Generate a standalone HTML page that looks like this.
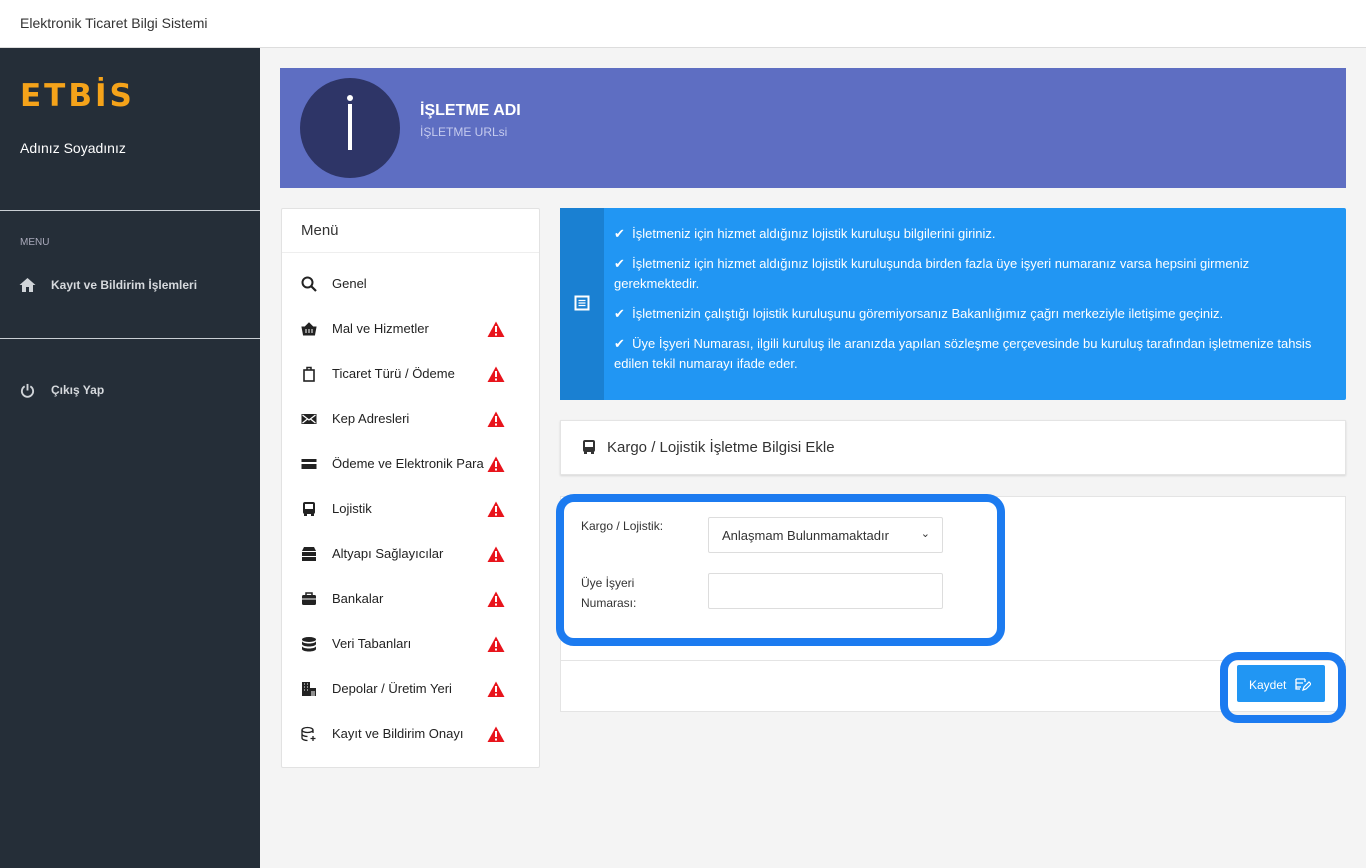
<!DOCTYPE html>
<html><head><meta charset="utf-8"><style>
*{box-sizing:border-box;margin:0;padding:0}
body{width:1366px;height:868px;overflow:hidden;font-family:"Liberation Sans",sans-serif;background:#f4f4f4;position:relative;color:#333}
.abs{position:absolute}
#top{left:0;top:0;width:1366px;height:48px;background:#fff;border-bottom:1px solid #ddd}
#side{left:0;top:48px;width:260px;height:820px;background:#252e38}
.hr{position:absolute;left:0;width:260px;height:1px;background:#c9ced3}
.mi{position:absolute;left:301px;height:16px;font-size:13px;color:#222}
.mi svg{position:absolute;left:0;top:0}
.mi span{position:absolute;left:31px;top:0;line-height:16px;white-space:nowrap}
.info p{font-size:13px;color:#fff;line-height:20px;margin-bottom:10px}
</style></head><body>
<div id="top" class="abs"><div class="abs" style="left:20px;top:15px;font-size:14px;color:#333">Elektronik Ticaret Bilgi Sistemi</div></div>
<div id="side" class="abs">
 <div class="abs" style="left:20px;top:30px;font-size:31px;font-weight:bold;color:#f5a31a;letter-spacing:3px;font-family:'DejaVu Sans',sans-serif">ETBİS</div>
 <div class="abs" style="left:20px;top:92px;font-size:14px;color:#fff">Adınız Soyadınız</div>
 <div class="hr" style="top:162px"></div>
 <div class="abs" style="left:20px;top:189px;font-size:10px;color:#aab">MENU</div>
 <svg class="abs" style="left:19px;top:229px" width="17" height="16" viewBox="0 0 17 16"><path d="M8.5 1L0.5 8h2.5v7h4v-5h3v5h4V8h2.5z" fill="#d0d4d8"/></svg>
 <div class="abs" style="left:51px;top:230px;font-size:12px;font-weight:bold;color:#d6d9dd">Kayıt ve Bildirim İşlemleri</div>
 <div class="hr" style="top:290px"></div>
 <svg class="abs" style="left:20px;top:335px" width="15" height="15" viewBox="0 0 16 16"><path d="M5 3.5A6 6 0 1 0 11 3.5" fill="none" stroke="#d0d4d8" stroke-width="2"/><path d="M8 1v7" stroke="#d0d4d8" stroke-width="2"/></svg>
 <div class="abs" style="left:51px;top:335px;font-size:12px;font-weight:bold;color:#d6d9dd">Çıkış Yap</div>
</div>
<div class="abs" style="left:280px;top:68px;width:1066px;height:120px;background:#5e6ec2"></div>
<div class="abs" style="left:300px;top:78px;width:100px;height:100px;border-radius:50%;background:#2e3567"></div>
<div class="abs" style="left:347px;top:95px;width:6px;height:6px;border-radius:50%;background:#fff"></div>
<div class="abs" style="left:348px;top:104px;width:4px;height:46px;background:#fff"></div>
<div class="abs" style="left:420px;top:102px;font-size:16px;font-weight:bold;color:#fff">İŞLETME ADI</div>
<div class="abs" style="left:420px;top:125px;font-size:12px;color:#c5cbee">İŞLETME URLsi</div>

<div class="abs" style="left:281px;top:208px;width:259px;height:560px;background:#fff;border:1px solid #e2e2e2;border-radius:2px"></div>
<div class="abs" style="left:301px;top:222px;font-size:15px;color:#333">Menü</div>
<div class="abs" style="left:282px;top:252px;width:257px;height:1px;background:#eee"></div>

<div class="mi" style="top:276px"><svg width="16" height="16" viewBox="0 0 16 16"><circle cx="6.5" cy="6.5" r="5" fill="none" stroke="#222" stroke-width="2"/><path d="M10 10l5 5" stroke="#222" stroke-width="2.2"/></svg><span>Genel</span></div>
<div class="mi" style="top:321px"><svg width="16" height="16" viewBox="0 0 16 16"><path d="M1 6h14l-1.5 8h-11z M4 6l4-4 4 4" fill="#222" stroke="#222"/><path d="M5 8v4M8 8v4M11 8v4" stroke="#fff"/></svg><span>Mal ve Hizmetler</span></div>
<div class="mi" style="top:366px"><svg width="16" height="16" viewBox="0 0 16 16"><rect x="3" y="4" width="10" height="11" fill="none" stroke="#222" stroke-width="1.6"/><path d="M6 4V1.5h4V4" fill="none" stroke="#222" stroke-width="1.5"/></svg><span>Ticaret Türü / Ödeme</span></div>
<div class="mi" style="top:411px"><svg width="16" height="16" viewBox="0 0 16 16"><rect x="0.5" y="3" width="15" height="10" fill="#222"/><path d="M1.5 4l6.5 5 6.5-5M1.5 12l5-4M14.5 12l-5-4" stroke="#fff" stroke-width="1.2" fill="none"/></svg><span>Kep Adresleri</span></div>
<div class="mi" style="top:456px"><svg width="16" height="16" viewBox="0 0 16 16"><rect x="0.5" y="3" width="15" height="10" fill="#222"/><rect x="0.5" y="6" width="15" height="2" fill="#fff"/></svg><span>Ödeme ve Elektronik Para</span></div>
<div class="mi" style="top:501px"><svg width="16" height="16" viewBox="0 0 16 16"><rect x="2" y="1" width="12" height="12" rx="2" fill="#222"/><rect x="4" y="3" width="8" height="5" fill="#fff"/><rect x="3" y="12" width="3" height="3" fill="#222"/><rect x="10" y="12" width="3" height="3" fill="#222"/></svg><span>Lojistik</span></div>
<div class="mi" style="top:546px"><svg width="16" height="16" viewBox="0 0 16 16"><path d="M3 1h10l2 4H1z" fill="#222"/><rect x="1" y="6" width="14" height="4" fill="#222"/><rect x="1" y="11" width="14" height="4" fill="#222"/></svg><span>Altyapı Sağlayıcılar</span></div>
<div class="mi" style="top:591px"><svg width="16" height="16" viewBox="0 0 16 16"><rect x="1" y="4" width="14" height="10" rx="1.5" fill="#222"/><path d="M5 4V2h6v2" fill="none" stroke="#222" stroke-width="1.5"/><path d="M1 8h14" stroke="#fff"/></svg><span>Bankalar</span></div>
<div class="mi" style="top:636px"><svg width="16" height="16" viewBox="0 0 16 16"><ellipse cx="8" cy="3.5" rx="7" ry="2.5" fill="#222"/><path d="M1 5v3c0 1.4 3 2.5 7 2.5s7-1.1 7-2.5V5c0 1.4-3 2.5-7 2.5S1 6.4 1 5zM1 10v3c0 1.4 3 2.5 7 2.5s7-1.1 7-2.5v-3c0 1.4-3 2.5-7 2.5S1 11.4 1 10z" fill="#222"/></svg><span>Veri Tabanları</span></div>
<div class="mi" style="top:681px"><svg width="16" height="16" viewBox="0 0 16 16"><rect x="1" y="1" width="8" height="14" fill="#222"/><rect x="9" y="7" width="6" height="8" fill="#222"/><path d="M3 3h1M6 3h1M3 6h1M6 6h1M3 9h1M6 9h1M11 10v5M13 10v5" stroke="#fff"/></svg><span>Depolar / Üretim Yeri</span></div>
<div class="mi" style="top:726px"><svg width="16" height="16" viewBox="0 0 16 16"><ellipse cx="6.5" cy="4" rx="5.5" ry="2.5" fill="none" stroke="#222" stroke-width="1.3"/><path d="M1 4v8c0 1.4 2.5 2.5 5.5 2.5M12 4v3M1 8c0 1.4 2.5 2.5 5.5 2.5M12 10v5M9.5 12.5h5" fill="none" stroke="#222" stroke-width="1.3"/></svg><span>Kayıt ve Bildirim Onayı</span></div>

<svg width="0" height="0" style="position:absolute"><defs><g id="w"><path d="M9 0.5L17.5 16H0.5z" fill="#e8141c"/><rect x="8" y="5" width="2" height="6" fill="#fff"/><rect x="8" y="12.5" width="2" height="2" fill="#fff"/></g></defs></svg>
<svg class="abs" style="left:487px;top:321px" width="18" height="17"><use href="#w"/></svg>
<svg class="abs" style="left:487px;top:366px" width="18" height="17"><use href="#w"/></svg>
<svg class="abs" style="left:487px;top:411px" width="18" height="17"><use href="#w"/></svg>
<svg class="abs" style="left:487px;top:456px" width="18" height="17"><use href="#w"/></svg>
<svg class="abs" style="left:487px;top:501px" width="18" height="17"><use href="#w"/></svg>
<svg class="abs" style="left:487px;top:546px" width="18" height="17"><use href="#w"/></svg>
<svg class="abs" style="left:487px;top:591px" width="18" height="17"><use href="#w"/></svg>
<svg class="abs" style="left:487px;top:636px" width="18" height="17"><use href="#w"/></svg>
<svg class="abs" style="left:487px;top:681px" width="18" height="17"><use href="#w"/></svg>
<svg class="abs" style="left:487px;top:726px" width="18" height="17"><use href="#w"/></svg>

<div class="abs" style="left:560px;top:208px;width:786px;height:192px;background:#2196f3;border-radius:2px"></div>
<div class="abs" style="left:560px;top:208px;width:44px;height:192px;background:#1a80d2"></div>
<svg class="abs" style="left:574px;top:295px" width="16" height="16" viewBox="0 0 16 16"><rect x="1.5" y="1.5" width="13" height="13" fill="none" stroke="#fff" stroke-width="2"/><path d="M4.5 5.5h7M4.5 8h7M4.5 10.5h7" stroke="#fff" stroke-width="1.3"/></svg>
<div class="abs info" style="left:614px;top:224px;width:720px">
<p>✔&nbsp; İşletmeniz için hizmet aldığınız lojistik kuruluşu bilgilerini giriniz.</p>
<p>✔&nbsp; İşletmeniz için hizmet aldığınız lojistik kuruluşunda birden fazla üye işyeri numaranız varsa hepsini girmeniz gerekmektedir.</p>
<p>✔&nbsp; İşletmenizin çalıştığı lojistik kuruluşunu göremiyorsanız Bakanlığımız çağrı merkeziyle iletişime geçiniz.</p>
<p>✔&nbsp; Üye İşyeri Numarası, ilgili kuruluş ile aranızda yapılan sözleşme çerçevesinde bu kuruluş tarafından işletmenize tahsis edilen tekil numarayı ifade eder.</p>
</div>

<div class="abs" style="left:560px;top:420px;width:786px;height:55px;background:#fff;border:1px solid #e4e4e4;box-shadow:0 1px 2px rgba(0,0,0,.12)"></div>
<svg class="abs" style="left:581px;top:439px" width="16" height="16" viewBox="0 0 16 16"><rect x="2" y="1" width="12" height="12" rx="2" fill="#333"/><rect x="4" y="3" width="8" height="5" fill="#fff"/><rect x="3" y="12" width="3" height="3" fill="#333"/><rect x="10" y="12" width="3" height="3" fill="#333"/></svg>
<div class="abs" style="left:607px;top:439px;font-size:15px;color:#333">Kargo / Lojistik İşletme Bilgisi Ekle</div>

<div class="abs" style="left:560px;top:496px;width:786px;height:216px;background:#fff;border:1px solid #e4e4e4"></div>
<div class="abs" style="left:561px;top:660px;width:784px;height:1px;background:#e4e4e4"></div>
<div class="abs" style="left:556px;top:494px;width:449px;height:152px;border:8px solid #1c7bf0;border-radius:18px"></div>
<div class="abs" style="left:581px;top:519px;font-size:12px;color:#333">Kargo / Lojistik:</div>
<div class="abs" style="left:581px;top:573px;font-size:12px;color:#333;line-height:20px">Üye İşyeri<br>Numarası:</div>
<div class="abs" style="left:708px;top:517px;width:235px;height:36px;border:1px solid #ddd;border-radius:2px;font-size:13px;color:#333;padding:10px 0 0 13px">Anlaşmam Bulunmamaktadır<span style="position:absolute;right:12px;top:9px;font-size:11px">⌄</span></div>
<div class="abs" style="left:708px;top:573px;width:235px;height:36px;border:1px solid #ddd;border-radius:2px"></div>
<div class="abs" style="left:1220px;top:652px;width:126px;height:71px;border:8px solid #1c7bf0;border-radius:18px"></div>
<div class="abs" style="left:1237px;top:665px;width:88px;height:37px;background:#2196f3;border-radius:2px;color:#fff;font-size:12px;padding:13px 0 0 12px">Kaydet
<svg style="position:absolute;left:58px;top:12px" width="16" height="14" viewBox="0 0 16 14"><path d="M1 2h9M1 6h7M1 10h5M1 2v10h4M10 2v3" fill="none" stroke="#fff" stroke-width="1.3"/><path d="M8 13l1-3 5-5 2 2-5 5z" fill="none" stroke="#fff" stroke-width="1.2"/></svg></div>
</body></html>
